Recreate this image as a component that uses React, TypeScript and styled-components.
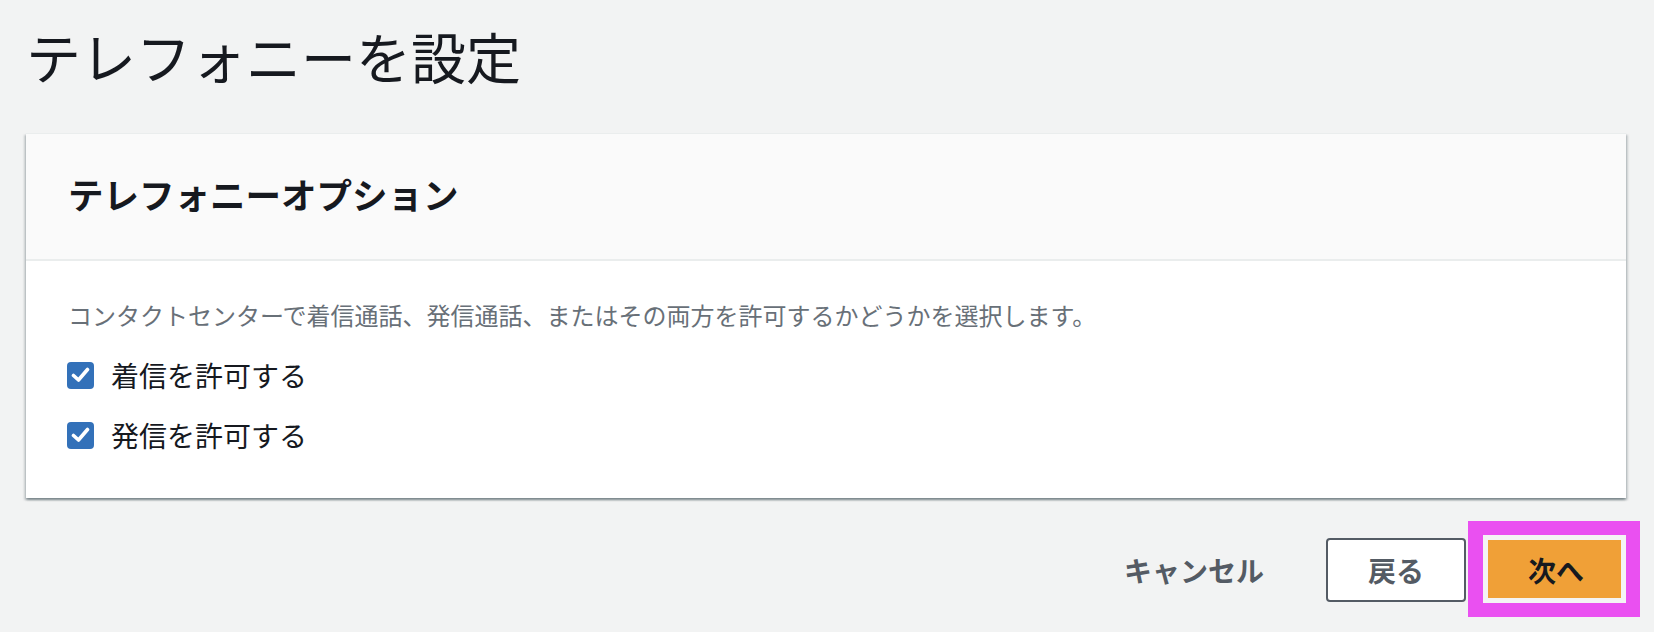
import React from 'react'
import styled, { createGlobalStyle } from 'styled-components'

const GlobalStyle = createGlobalStyle`
    html, body {
        margin: 0;
        padding: 0;
        background: #f2f3f3;
    }

    body {
        font-family: "Noto Sans CJK JP", "Noto Sans", sans-serif;
        color: #16191f;
    }
`

const Page = styled.div`
    width: 1654px;
    height: 632px;
    box-sizing: border-box;
    padding: 22px 28px 0 26px;
    background: #f2f3f3;
    overflow: hidden;
`

const Title = styled.h1`
    margin: 0 0 45px;
    font-size: 55px;
    font-weight: 400;
    line-height: 66px;
    color: #16191f;
`

const Card = styled.section`
    background: #ffffff;
    border-top: 1px solid #eaeded;
    box-shadow: 0 2px 2px 0 rgba(0, 28, 36, 0.3),
        2px 2px 2px 0 rgba(0, 28, 36, 0.15),
        -2px 2px 2px 0 rgba(0, 28, 36, 0.15);
`

const CardHeader = styled.div`
    background: #fafafa;
    border-bottom: 2px solid #eaeded;
    padding: 38px 42px 43px;
`

const CardTitle = styled.h2`
    margin: 0;
    font-size: 35.5px;
    font-weight: 700;
    line-height: 44px;
`

const CardBody = styled.div`
    padding: 40px 42px 33px;
`

const Description = styled.p`
    margin: 0 0 16px;
    font-size: 24px;
    line-height: 28px;
    color: #687078;
`

const OptionList = styled.div`
    display: flex;
    flex-direction: column;
`

const Option = styled.label`
    display: flex;
    align-items: center;
    gap: 17px;
    height: 60px;
    font-size: 28px;
    color: #16191f;
    cursor: pointer;
`

const Box = styled.span<{ $checked: boolean }>`
    display: flex;
    align-items: center;
    justify-content: center;
    width: 27px;
    height: 27px;
    margin-left: -1px;
    border-radius: 4px;
    background: ${({ $checked }) => ($checked ? '#3371b9' : '#ffffff')};
    border: ${({ $checked }) => ($checked ? 'none' : '2px solid #aab7b8')};
    box-sizing: border-box;
`

const Footer = styled.div`
    display: flex;
    justify-content: flex-end;
    align-items: center;
    gap: 20px;
    margin-top: 40px;
`

const Button = styled.button<{ $variant: 'link' | 'normal' | 'primary' }>`
    position: relative;
    height: 64px;
    padding: 0 40px;
    box-sizing: border-box;
    border-radius: 4px;
    font-family: inherit;
    font-size: 28px;
    font-weight: 700;
    cursor: pointer;
    color: ${({ $variant }) => ($variant === 'primary' ? '#16191f' : '#545b64')};
    background: ${({ $variant }) =>
        $variant === 'primary' ? '#f0a037' : $variant === 'normal' ? '#ffffff' : 'transparent'};
    border: 2px solid ${({ $variant }) =>
        $variant === 'primary' ? '#f0a037' : $variant === 'normal' ? '#545b64' : 'transparent'};
`

// annotation frame drawn over the primary button
const Highlight = styled.span`
    position: absolute;
    top: -19px;
    left: -20px;
    right: -16px;
    bottom: -17px;
    border: 14px solid #ea50f1;
    border-left-width: 15px;
    box-shadow: inset 0 0 0 5px #f4f4f4;
    pointer-events: none;
`

const Check = () => (
    <svg width="19" height="16" viewBox="0 0 19 16">
        <polyline
            points="2.5,8.5 7.5,13 16.5,2.5"
            fill="none"
            stroke="#ffffff"
            strokeWidth="3.6"
            strokeLinecap="round"
            strokeLinejoin="round"
        />
    </svg>
)

const Checkbox = ({ checked, label }: { checked: boolean; label: string }) => (
    <Option>
        <Box $checked={checked}>{checked && <Check />}</Box>
        {label}
    </Option>
)

const App = () => {
    return (
        <>
            <GlobalStyle />
            <Page>
                <Title>テレフォニーを設定</Title>
                <Card>
                    <CardHeader>
                        <CardTitle>テレフォニーオプション</CardTitle>
                    </CardHeader>
                    <CardBody>
                        <Description>
                            コンタクトセンターで着信通話、発信通話、またはその両方を許可するかどうかを選択します。
                        </Description>
                        <OptionList>
                            <Checkbox checked label="着信を許可する" />
                            <Checkbox checked label="発信を許可する" />
                        </OptionList>
                    </CardBody>
                </Card>
                <Footer>
                    <Button $variant="link">キャンセル</Button>
                    <Button $variant="normal">戻る</Button>
                    <Button $variant="primary">
                        次へ
                        <Highlight />
                    </Button>
                </Footer>
            </Page>
        </>
    )
}

export default App
